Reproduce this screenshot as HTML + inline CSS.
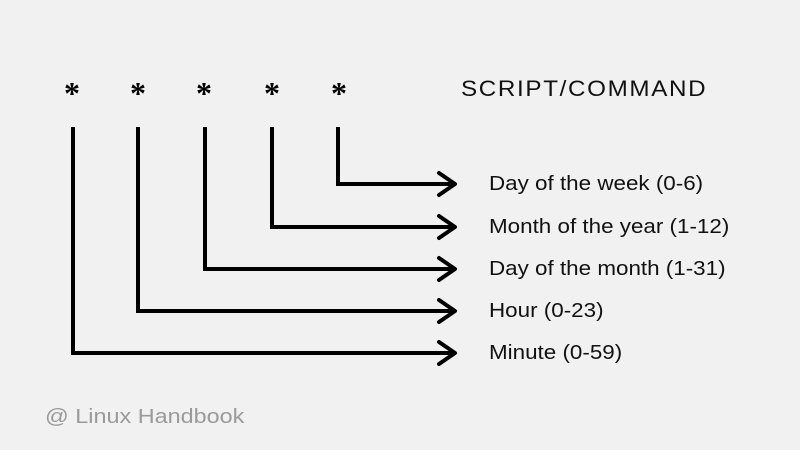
<!DOCTYPE html>
<html><head><style>
body{margin:0;width:800px;height:450px;background:#f1f1f1;overflow:hidden;font-family:"Liberation Sans",sans-serif;}
.t{position:absolute;font-size:20px;color:#111;white-space:nowrap;line-height:1;transform-origin:0 0;transform:scaleX(1.12)}
.a{position:absolute;font-family:"Liberation Serif",serif;font-size:32px;font-weight:bold;top:77px;line-height:1}
</style></head><body>
<svg width="800" height="450" style="position:absolute;left:0;top:0" fill="none" stroke="#000" stroke-width="4">
<path d="M338 127V184H455M272 127V227H455M205 127V269H455M138 127V311H455M73 127V353H455"/>
<path stroke-linecap="round" stroke-linejoin="round" d="M439 173L455 184L439 195M439 216L455 227L439 238M439 258L455 269L439 280M439 300L455 311L439 322M439 342L455 353L439 364"/>
</svg>
<div class="a" style="left:64px">*</div>
<div class="a" style="left:130px">*</div>
<div class="a" style="left:196px">*</div>
<div class="a" style="left:264px">*</div>
<div class="a" style="left:331px">*</div>
<div class="t" style="left:461px;top:78px;font-size:22px;letter-spacing:1.5px;transform:scaleX(1.1)">SCRIPT/COMMAND</div>
<div class="t" style="left:489px;top:174px">Day of the week (0-6)</div>
<div class="t" style="left:489px;top:217px">Month of the year (1-12)</div>
<div class="t" style="left:489px;top:259px">Day of the month (1-31)</div>
<div class="t" style="left:489px;top:301px">Hour (0-23)</div>
<div class="t" style="left:489px;top:343px">Minute (0-59)</div>
<div class="t" style="left:45px;top:407px;color:#9a9a9a;font-size:20px;transform:scaleX(1.17)">@ Linux Handbook</div>
</body></html>
